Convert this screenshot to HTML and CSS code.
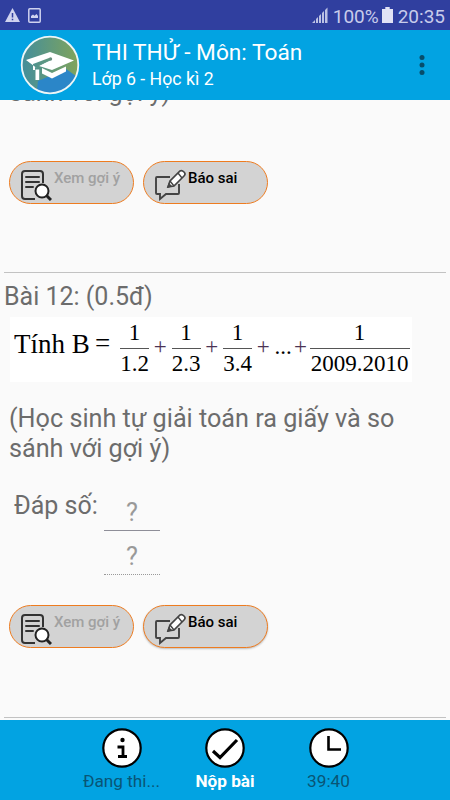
FILE: index.html
```html
<!DOCTYPE html>
<html lang="vi">
<head>
  <meta charset="UTF-8">
  <meta name="viewport" content="width=device-width, initial-scale=1.0">
  <title>Thi thử - Môn: Toán</title>
  <link rel="stylesheet" href="styles.css">
</head>
<body>
  <svg class="defs" width="0" height="0">
    <symbol id="icon-hint" viewBox="0 0 32 32">
      <path d="M15 30H5Q2 30 2 27V5Q2 2 5 2H20Q23 2 23 5V14" fill="none" stroke="#333" stroke-width="2"/>
      <path d="M6 8H19M6 13H19M6 18H13" stroke="#333" stroke-width="2" stroke-linecap="round"/>
      <path d="M26 26L31 31" stroke="#222" stroke-width="3"/>
      <circle cx="22" cy="22" r="6.5" fill="#fff" stroke="#222" stroke-width="2"/>
    </symbol>
    <symbol id="icon-report" viewBox="0 0 32 32">
      <path d="M16 8H3Q2 8 2 9V24Q2 25 3 25H6V30L12 25H24Q25 25 25 24V15" fill="none" stroke="#444" stroke-width="1.9"/>
      <path d="M14 18L16 12L26 2Q28 1 30 3Q32 5 30 7L20 17Z" fill="#fff" stroke="#444" stroke-width="1.7"/>
      <path d="M24 4L28 9M16 12L20 17M14 18L17 17L15 15Z" fill="#444" stroke="#444" stroke-width="1.4"/>
    </symbol>
  </svg>

  <div class="status-bar">
    <svg width="15" height="14" viewBox="0 0 15 14"><path d="M7.5 0L15 14H0Z" fill="#cfd2ef"/><path d="M7.5 5V9.5M7.5 10.7V12.3" stroke="#303f9f" stroke-width="1.5"/></svg>
    <svg class="status-image" width="13" height="15" viewBox="0 0 13 15"><rect x=".8" y=".8" width="11.4" height="13.4" rx="1" fill="none" stroke="#cfd2ef" stroke-width="1.5"/><path d="M3 10V8L5 6.5L6.5 7.7L8.5 6L10 8V10Z" fill="#cfd2ef"/></svg>
    <svg class="signal" width="16" height="16" viewBox="0 0 16 16"><path d="M0 16L3 13V16ZM4 12L6 10V16H4ZM7 9L9 7V16H7ZM10 6L12 4V16H10ZM13 3L15.5 .5V16H13Z" fill="#bcc2e4"/></svg>
    <span class="battery-text">100%</span>
    <svg class="battery" width="11" height="16" viewBox="0 0 10 16" preserveAspectRatio="none"><path d="M3 0H7V2H10V16H0V2H3Z" fill="#e1e2f5"/></svg>
    <span class="clock-text">20:35</span>
  </div>

  <header class="app-bar">
    <svg class="logo" width="60" height="60" viewBox="0 0 60 60">
      <defs><linearGradient id="sky" x1="0" y1="0" x2="1" y2="0"><stop offset="0" stop-color="#438e9c"/><stop offset="1" stop-color="#80a45b"/></linearGradient></defs>
      <circle cx="30" cy="30" r="28.3" fill="url(#sky)"/>
      <path d="M18 46L46 34L56 41A28.3 28.3 0 0 1 17 55Z" fill="#2b86c8"/>
      <circle cx="30" cy="30" r="28.3" fill="none" stroke="#edf6f7" stroke-width="1.8"/>
      <path d="M6 25L30 17L54 25.5L32 35L19 31L30 25L29 23L13 29V35H15V32L18 34Z" fill="#fff"/>
      <path d="M15.5 34.5H19.2V45H15.5ZM22 33L32 38L46 31.5V36.5L32 43.5L22 38.5Z" fill="#fff"/>
      <circle cx="30.5" cy="24" r="1.7" fill="#668e7d"/>
      <path d="M30 25L18 30.5V33" fill="none" stroke="#5c9888" stroke-width="1.1"/>
    </svg>
    <div class="app-titles">
      <div class="app-title">THI THỬ - Môn: Toán</div>
      <div class="app-subtitle">Lớp 6 - Học kì 2</div>
    </div>
    <svg class="menu" width="6" height="20" viewBox="0 0 6 20" fill="#074d6b"><circle cx="3" cy="2.6" r="2.5"/><circle cx="3" cy="10" r="2.5"/><circle cx="3" cy="17.4" r="2.5"/></svg>
  </header>

  <main class="questions">
    <section class="question previous">
      <p class="note">sánh với gợi ý)</p>
      <div class="actions">
        <button class="pill disabled"><svg width="32" height="32"><use href="#icon-hint"/></svg><span>Xem gợi ý</span></button>
        <button class="pill"><svg width="32" height="32"><use href="#icon-report"/></svg><span>Báo sai</span></button>
      </div>
    </section>

    <section class="question current">
      <h2>Bài 12: (0.5đ)</h2>
      <div class="formula">
        <span class="lead">Tính B</span>
        <span class="equals">=</span>
        <span class="fraction"><span>1</span><span>1.2</span></span>
        <span class="op">+</span>
        <span class="fraction"><span>1</span><span>2.3</span></span>
        <span class="op">+</span>
        <span class="fraction"><span>1</span><span>3.4</span></span>
        <span class="op">+</span>
        <span class="dots">...</span>
        <span class="op last">+</span>
        <span class="fraction wide"><span>1</span><span>2009.2010</span></span>
      </div>
      <p class="note">(Học sinh tự giải toán ra giấy và so<br>sánh với gợi ý)</p>
      <div class="answer">
        <span class="answer-label">Đáp số:</span>
        <div class="answer-fields">
          <div class="field numerator">?</div>
          <div class="field denominator">?</div>
        </div>
      </div>
      <div class="actions">
        <button class="pill disabled"><svg width="32" height="32"><use href="#icon-hint"/></svg><span>Xem gợi ý</span></button>
        <button class="pill raised"><svg width="32" height="32"><use href="#icon-report"/></svg><span>Báo sai</span></button>
      </div>
    </section>
    <div class="end-line"></div>
  </main>

  <nav class="bottom-bar">
    <div class="tab">
      <svg width="40" height="40" viewBox="0 0 40 40"><circle cx="20" cy="20" r="18.7" fill="#fff" stroke="#000" stroke-width="2.2"/><circle cx="20.5" cy="12" r="2.2"/><path d="M15.5 19H21V28M16 28.5H25" fill="none" stroke="#000" stroke-width="2.8"/></svg>
      <span>Đang thi...</span>
    </div>
    <div class="tab active">
      <svg width="40" height="40" viewBox="0 0 40 40"><circle cx="20" cy="20" r="18.7" fill="#fff" stroke="#000" stroke-width="2.2"/><path d="M8 23L15 29.5L32 12" fill="none" stroke="#000" stroke-width="3.2"/></svg>
      <span>Nộp bài</span>
    </div>
    <div class="tab">
      <svg width="40" height="40" viewBox="0 0 40 40"><circle cx="20" cy="20" r="18.7" fill="#fff" stroke="#000" stroke-width="2.2"/><path d="M19.5 8V21.5H32" fill="none" stroke="#000" stroke-width="2.6"/></svg>
      <span>39:40</span>
    </div>
  </nav>
</body>
</html>
```
FILE: styles.css
```css
* {
  box-sizing: border-box;
}
body {
  font-family: Roboto, "Noto Sans", sans-serif;
  background: #fafafa;
  display: flex;
  flex-direction: column;
  height: 800px;
  margin: 0;
  overflow: hidden;
}
.defs {
  display: none;
}
.status-bar {
  background: #303f9f;
  color: #c8cceb;
  display: flex;
  align-items: center;
  height: 30px;
  flex: none;
  padding: 0 5px 0 5px;
  font-size: 19px;
}
.battery-text, .clock-text {
  padding-top: 2px;
}
.status-image {
  margin-left: 8px;
}
.signal {
  margin-left: auto;
  margin-right: 5px;
}
.battery {
  margin: 0 5px 0 3px;
}
.app-bar {
  background: #02a3e2;
  color: white;
  display: flex;
  align-items: center;
  height: 70px;
  flex: none;
  padding: 0 25px 0 20px;
}
.app-titles {
  margin-left: 12px;
  white-space: nowrap;
}
.app-title {
  font-size: 22.7px;
  line-height: 28px;
}
.app-subtitle {
  font-size: 17.7px;
  line-height: 24px;
}
.menu {
  margin-left: auto;
}
.questions {
  height: 620px;
  flex: none;
  overflow: hidden;
  color: #6c6c6c;
  font-size: 25.2px;
}
.question {
  padding: 0 4px;
}
.previous {
  margin-top: -22px;
  height: 194px;
}
.note {
  margin: 0;
  padding-left: 5px;
  line-height: 30px;
}
.previous .actions {
  margin-top: 53px;
}
.current {
  border-top: 1px solid #c2c2c2;
  margin: 0 4px;
  padding: 0;
  height: 445px;
}
h2 {
  font-size: 25px;
  font-weight: normal;
  line-height: 30px;
  margin: 9px 0 5px;
}
.formula {
  background: white;
  color: black;
  display: flex;
  width: 402px;
  height: 65px;
  margin: 0 0 22px 6px;
  padding-left: 4px;
  font-family: "Liberation Serif", serif;
  font-size: 23px;
  line-height: 28px;
  white-space: nowrap;
}
.lead {
  width: 81px;
  padding-top: 12px;
  font-size: 27px;
  line-height: 30px;
}
.equals {
  width: 25px;
  padding-top: 12px;
  font-size: 27px;
}
.fraction {
  width: 29px;
  text-align: center;
  padding-top: 2px;
}
.fraction span {
  display: block;
}
.fraction span:first-child {
  border-bottom: 1px solid #555;
  height: 30px;
}
.fraction span:last-child {
  padding-top: 1px;
}
.op {
  width: 22.5px;
  text-align: center;
  padding-top: 16px;
  color: #4b3354;
}
.dots {
  width: 17px;
  padding-top: 16px;
}
.op.last {
  width: 18px;
}
.fraction.wide {
  width: 100px;
}
.answer {
  display: flex;
  margin-top: 27px;
  padding-left: 10px;
}
.answer-label {
  width: 90px;
  font-size: 25px;
  line-height: 30px;
}
.field {
  width: 56px;
  text-align: center;
  color: #999;
}
.numerator {
  height: 40px;
  padding-top: 7px;
  line-height: 30px;
  border-bottom: 1px solid #8e8e98;
}
.denominator {
  height: 44px;
  padding-top: 11px;
  line-height: 30px;
  border-bottom: 1px dotted #999;
}
.actions {
  display: flex;
  gap: 9px;
  padding-left: 5px;
}
.current .actions {
  margin-top: 30px;
}
.pill {
  width: 125px;
  height: 43px;
  display: flex;
  align-items: flex-start;
  background: #d3d3d3;
  border: 1px solid #ee7c20;
  border-radius: 22px;
  padding: 7px 0 0 10px;
  font-family: inherit;
  font-size: 15px;
  font-weight: 500;
  color: black;
  white-space: nowrap;
}
.pill span {
  margin-left: 2px;
  line-height: 19px;
}
.pill.disabled {
  color: #a1a1a1;
}
.pill.raised {
  box-shadow: 0 1px 2px #bbb;
}
.end-line {
  border-top: 1px solid #c2c2c2;
  margin: 0 4px;
}
.bottom-bar {
  background: #02a3e2;
  height: 80px;
  flex: none;
  display: flex;
  justify-content: center;
  padding-top: 8px;
  font-size: 17.2px;
}
.tab {
  width: 103.5px;
  display: flex;
  flex-direction: column;
  align-items: center;
  gap: 3px;
  color: #095575;
}
.tab.active {
  color: white;
  font-weight: 700;
}
```
